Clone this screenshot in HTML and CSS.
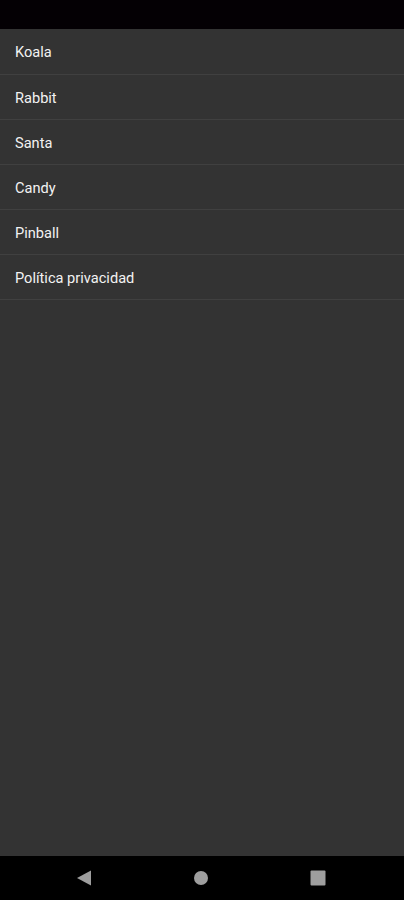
FILE: index.html
```html
<!DOCTYPE html>
<html lang="es">
<head>
    <meta charset="UTF-8">
    <meta name="viewport" content="width=device-width, initial-scale=1.0">
    <title>Lista</title>
    <link rel="stylesheet" href="styles.css">
</head>
<body>

<div class="status-bar"></div>

<main class="content">
    <ul class="menu-list">
        <li class="menu-item">Koala</li>
        <li class="menu-item">Rabbit</li>
        <li class="menu-item">Santa</li>
        <li class="menu-item">Candy</li>
        <li class="menu-item">Pinball</li>
        <li class="menu-item">Política privacidad</li>
    </ul>
</main>

<nav class="nav-bar">
    <svg class="nav-icon" width="16" height="16" viewBox="0 0 16 16">
        <polygon points="15,0.5 15,15.5 1,8" fill="#9e9e9e"/>
    </svg>
    <svg class="nav-icon" width="16" height="16" viewBox="0 0 16 16">
        <circle cx="8" cy="8" r="7" fill="#9e9e9e"/>
    </svg>
    <svg class="nav-icon" width="16" height="16" viewBox="0 0 16 16">
        <rect x="0.5" y="0.5" width="15" height="15" rx="1" fill="#9e9e9e"/>
    </svg>
</nav>

</body>
</html>
```

FILE: styles.css
```css
body {
    font-family: Roboto, "Noto Sans", sans-serif;
    background-color: #333333;
    color: #f2f2f2;
    margin: 0;
    padding: 0;
    height: 900px;
    display: flex;
    flex-direction: column;
}
.status-bar {
    height: 29px;
    background-color: #040004;
}
.content {
    flex: 1;
}
.menu-list {
    list-style: none;
    margin: 0;
    padding: 0;
}
.menu-item {
    height: 44px;
    line-height: 46px;
    padding-left: 15px;
    font-size: 14.6px;
    border-bottom: 1px solid #404040;
}
.menu-item:first-child {
    height: 45px;
}
.nav-bar {
    height: 44px;
    background-color: #000;
    display: flex;
    align-items: center;
    justify-content: space-between;
    padding: 0 78px 0 76px;
}
.nav-icon {
    display: block;
}
```
